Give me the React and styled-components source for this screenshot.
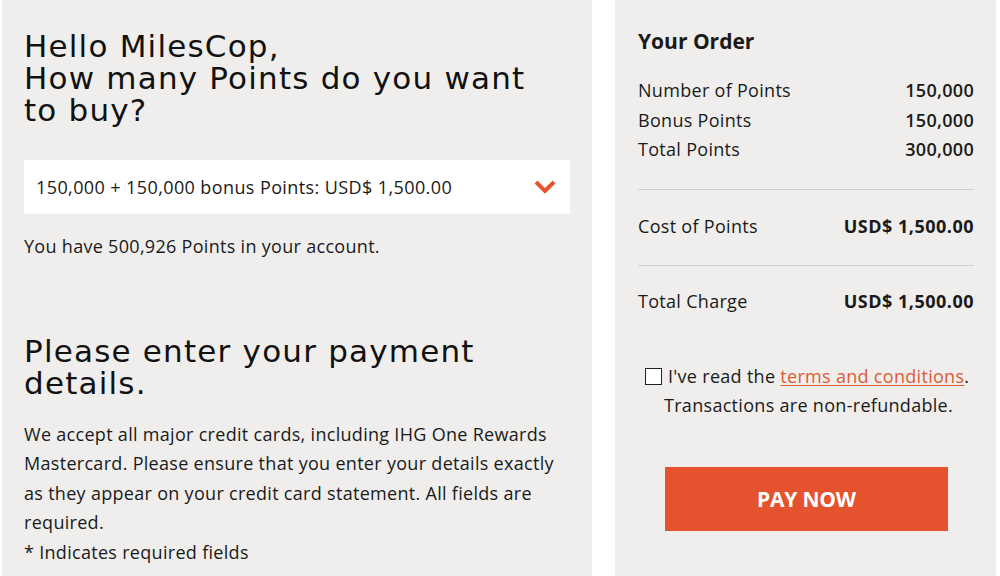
import React from "react"
import styled, { createGlobalStyle } from "styled-components"

const GlobalStyle = createGlobalStyle`
  html, body {
    margin: 0;
    padding: 0;
    background: #ffffff;
  }
  body {
    font-family: "Open Sans", "Liberation Sans", sans-serif;
    color: #1a1a1a;
  }
`

const Page = styled.div`
  display: flex;
  width: 1000px;
  height: 576px;
  padding-left: 2px;
  box-sizing: border-box;
  overflow: hidden;
`

const MainPanel = styled.div`
  width: 590px;
  background: #efeeec;
  padding: 30px 22px 0 22px;
  box-sizing: border-box;
`

const SidePanel = styled.div`
  width: 381px;
  margin-left: 23px;
  background: #efeeec;
  padding: 27px 22px 0 23px;
  box-sizing: border-box;
`

const Heading = styled.h1`
  font-family: "DejaVu Sans", "Liberation Sans", sans-serif;
  font-weight: 400;
  font-size: 31px;
  line-height: 32px;
  letter-spacing: 1.2px;
  max-width: 525px;
  margin: ${(p) => p.$margin || "0"};
  color: #111;
`

const Select = styled.div`
  margin-top: 34px;
  height: 54px;
  background: #ffffff;
  display: flex;
  align-items: center;
  justify-content: space-between;
  padding: 0 14px 0 12px;
  font-size: 18px;
  letter-spacing: 0.4px;
`

const Text = styled.p`
  font-size: 18px;
  line-height: 29.5px;
  letter-spacing: 0.3px;
  max-width: 540px;
  margin: ${(p) => p.$margin || "0"};
  color: #1a1a1a;
`

const OrderTitle = styled.h2`
  font-size: 21px;
  font-weight: 700;
  margin: 0 0 21px 0;
  line-height: 28px;
`

const Row = styled.div`
  display: flex;
  justify-content: space-between;
  font-size: 18px;
  line-height: 29.5px;
  letter-spacing: 0.3px;
`

const Value = styled.span`
  font-weight: ${(p) => (p.$strong ? 700 : 600)};
  letter-spacing: ${(p) => (p.$strong ? "0.5px" : "0.3px")};
`

const Divider = styled.hr`
  border: none;
  border-top: 1px solid #cfcecc;
  margin: ${(p) => p.$margin || "16px 0"};
`

const Terms = styled.div`
  margin-top: 45px;
  padding-left: 7px;
  font-size: 18px;
  line-height: 29.5px;
  letter-spacing: 0.3px;
`

const TermsLine = styled.div`
  display: flex;
  align-items: center;
  padding-left: ${(p) => (p.$indent ? "19px" : "0")};
`

const Box = styled.span`
  width: 15px;
  height: 15px;
  border: 1.5px solid #222;
  background: #fff;
  margin-right: 6px;
  flex-shrink: 0;
`

const Link = styled.a`
  color: #df5a36;
  text-decoration: underline;
  text-underline-offset: 2px;
`

const PayButton = styled.button`
  display: block;
  margin: 46px 0 0 27px;
  width: 283px;
  height: 64px;
  background: #e4532d;
  border: none;
  color: #fff;
  font-family: "Open Sans", "Liberation Sans", sans-serif;
  font-weight: 700;
  font-size: 21px;
  letter-spacing: -0.2px;
`

const Chevron = () => (
  <svg width="22" height="14" viewBox="0 0 22 14">
    <path d="M2 2 L11 11 L20 2" fill="none" stroke="#e4532d" strokeWidth="4" strokeLinejoin="miter" />
  </svg>
)

const App = () => (
  <>
    <GlobalStyle />
    <Page>
      <MainPanel>
        <Heading>
          Hello MilesCop,
          <br />
          How many Points do you want to buy?
        </Heading>
        <Select>
          <span>150,000 + 150,000 bonus Points: USD$ 1,500.00</span>
          <Chevron />
        </Select>
        <Text $margin="18px 0 0 0">You have 500,926 Points in your account.</Text>
        <Heading $margin="73px 0 0 0">Please enter your payment details.</Heading>
        <Text $margin="21px 0 0 0">
          We accept all major credit cards, including IHG One Rewards Mastercard. Please ensure that you
          enter your details exactly as they appear on your credit card statement. All fields are required.
        </Text>
        <Text>* Indicates required fields</Text>
      </MainPanel>
      <SidePanel>
        <OrderTitle>Your Order</OrderTitle>
        <Row>
          <span>Number of Points</span>
          <Value>150,000</Value>
        </Row>
        <Row>
          <span>Bonus Points</span>
          <Value>150,000</Value>
        </Row>
        <Row>
          <span>Total Points</span>
          <Value>300,000</Value>
        </Row>
        <Divider $margin="24px 0 22px 0" />
        <Row>
          <span>Cost of Points</span>
          <Value $strong>USD$ 1,500.00</Value>
        </Row>
        <Divider $margin="24px 0 21px 0" />
        <Row>
          <span>Total Charge</span>
          <Value $strong>USD$ 1,500.00</Value>
        </Row>
        <Terms>
          <TermsLine>
            <Box />
            <span>
              I've read the <Link>terms and conditions</Link>.
            </span>
          </TermsLine>
          <TermsLine $indent>Transactions are non-refundable.</TermsLine>
        </Terms>
        <PayButton>PAY NOW</PayButton>
      </SidePanel>
    </Page>
  </>
)

export default App
